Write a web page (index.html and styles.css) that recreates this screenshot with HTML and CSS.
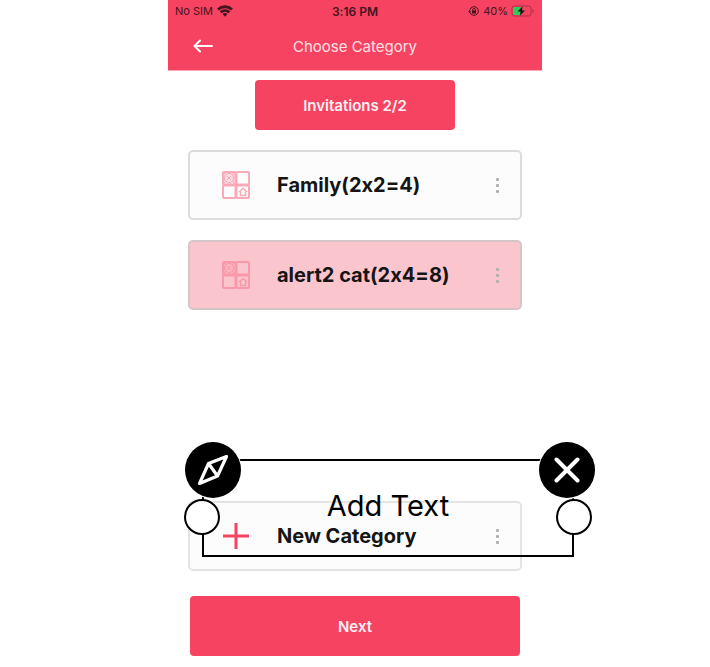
FILE: index.html
```html
<!DOCTYPE html>
<html lang="en">
<head>
<meta charset="utf-8">
<meta name="viewport" content="width=device-width, initial-scale=1">
<title>Choose Category</title>
<link rel="stylesheet" href="styles.css">
</head>
<body>
<svg width="0" height="0" class="defs" aria-hidden="true">
  <symbol id="grid" viewBox="0 0 28 28">
    <g fill="none" stroke="currentColor" stroke-width="2">
      <rect x="1" y="1" width="12.500" height="12.500" rx="1" fill="currentColor" fill-opacity=".35"/>
      <rect x="14.500" y="1" width="12.500" height="12.500" rx="1"/>
      <rect x="1" y="14.500" width="12.500" height="12.500" rx="1"/>
      <rect x="14.500" y="14.500" width="12.500" height="12.500" rx="1"/>
      <circle cx="7" cy="7" r="4.500" stroke-width="1.2"/>
      <path d="M5 5l4 4M9 5L5 9M2 2l2 2M12 2l-2 2M2 12l2-2M12 12l-2-2" stroke-width="1"/>
      <path d="M17 21l4-3.500 4 3.500M18.500 20.500V24.500H23.500V20.500" stroke-width="1.400"/>
    </g>
  </symbol>
  <symbol id="dots" viewBox="0 0 6 16">
    <g fill="currentColor"><rect x="2" y="1" width="3" height="3" rx="1"/><rect x="2" y="7" width="3" height="3" rx="1"/><rect x="2" y="13" width="3" height="3" rx="1"/></g>
  </symbol>
</svg>
<div class="phone">
  <header class="header">
    <div class="status">
      <span class="carrier">No SIM
        <svg width="16" height="12" viewBox="0 0 16 12" aria-hidden="true"><g fill="none" stroke="currentColor" stroke-width="2.800"><path d="M1 4.500C5 .8 11 .8 15 4.500"/><path d="M3.600 7.300c2.600-2.300 6.200-2.300 8.800 0"/></g><path d="M5.500 9C7 7.800 9 7.800 10.500 9L8 11.800z" fill="currentColor"/></svg>
      </span>
      <span class="time">3:16 PM</span>
      <span class="power">
        <svg width="12" height="12" viewBox="0 0 12 12" aria-hidden="true"><circle cx="6" cy="6" r="4.300" fill="none" stroke="currentColor" stroke-width="1"/><rect x="4" y="5.500" width="4" height="3" fill="currentColor"/><path d="M4.700 6V4.700a1.300 1.300 0 0 1 2.600 0V6" fill="none" stroke="currentColor"/><path d="M0 6h3L1.500 8z" fill="currentColor"/></svg>
        40%
        <svg width="24" height="12" viewBox="0 0 24 12" aria-hidden="true"><rect x="1" y="1" width="19" height="10" rx="2.500" fill="none" stroke="#a8304a"/><rect x="2" y="2" width="8" height="8" rx="1" fill="#35c759"/><path d="M21.500 4c1.500 1 1.500 3 0 4z" fill="#a8304a"/><path d="M11.500 1.500L6.500 6.500h3l-.5 4 5-5h-3z" fill="#111"/></svg>
      </span>
    </div>
    <div class="bar">
      <button class="back" aria-label="Back"><svg width="20" height="14" viewBox="0 0 20 14"><path d="M19 7H1.500M7 1.500L1.500 7 7 12.500" fill="none" stroke="currentColor" stroke-width="2" stroke-linecap="round" stroke-linejoin="round"/></svg></button>
      <h1>Choose Category</h1>
    </div>
  </header>
  <main>
    <button class="invitations">Invitations 2/2</button>
    <article class="card">
      <svg class="icon" aria-hidden="true"><use href="#grid"/></svg>
      <h2>Family(2x2=4)</h2>
      <button class="more" aria-label="More options"><svg width="6" height="16"><use href="#dots"/></svg></button>
    </article>
    <article class="card selected">
      <svg class="icon" aria-hidden="true"><use href="#grid"/></svg>
      <h2>alert2 cat(2x4=8)</h2>
      <button class="more" aria-label="More options"><svg width="6" height="16"><use href="#dots"/></svg></button>
    </article>
    <div class="new">
      <article class="card">
        <svg class="icon plus" viewBox="0 0 28 28" aria-hidden="true"><path d="M14 1v26M1 14h26" stroke="currentColor" stroke-width="3"/></svg>
        <h2>New Category</h2>
        <button class="more" aria-label="More options"><svg width="6" height="16"><use href="#dots"/></svg></button>
      </article>
      <div class="textbox">
        <span>Add Text</span>
        <button class="handle left" aria-label="Resize left"></button>
        <button class="handle right" aria-label="Resize right"></button>
        <button class="round rotate" aria-label="Rotate"><svg width="32" height="32" viewBox="0 0 32 32"><path d="M29.500 2.500L11.500 9.500 2.500 29.500l18-7.500zM11.500 9.500l9 12.500" fill="none" stroke="#fff" stroke-width="3.200" stroke-linejoin="round"/></svg></button>
        <button class="round remove" aria-label="Remove"><svg width="26" height="26" viewBox="0 0 26 26"><path d="M2.500 2.500l21 21M23.500 2.500l-21 21" stroke="#fff" stroke-width="4" stroke-linecap="round"/></svg></button>
      </div>
    </div>
    <button class="next">Next</button>
  </main>
</div>
</body>
</html>
```
FILE: styles.css
```css
* { box-sizing: border-box; }
body { margin: 0; background: #fff; color: #151515; font-family: Inter, "Liberation Sans", sans-serif; font-variant-ligatures: no-contextual; }
button { font: inherit; border: 0; padding: 0; color: inherit; background: none; }
svg { display: block; }
h1, h2 { margin: 0; }
.defs { position: absolute; }
.phone { max-width: 374px; margin: 0 auto; }
.header { background: #f64361; height: 70px; box-shadow: 0 1px 0 #fba6b4; }
.status { display: grid; grid-template-columns: 1fr auto 1fr; align-items: center; height: 22px; padding: 0 7px; font-size: 11px; color: #45141d; }
.carrier, .power { display: flex; align-items: center; gap: 4px; }
.power { justify-content: flex-end; gap: 3px; }
.time { font-size: 12px; font-weight: 600; }
.bar { display: grid; grid-template-columns: 20px 1fr 20px; align-items: center; height: 48px; padding: 0 25px; color: #ffe0e6; }
.bar h1 { text-align: center; font-size: 15px; font-weight: 400; }
.back { color: #fff; }
main { display: flex; flex-direction: column; gap: 20px; padding: 10px 20px; }
.invitations, .next { background: #f64361; color: #fff0f3; border-radius: 4px; font-size: 15px; font-weight: 600; }
.invitations { align-self: center; width: 200px; height: 50px; }
.card { display: flex; align-items: center; height: 70px; padding: 0 20px 0 32px; border: 2px solid #dcdcdc; border-radius: 5px; background: #fcfcfc; }
.card h2 { flex: 1; margin-left: 27px; font-size: 20px; font-weight: 700; }
.icon { width: 28px; height: 28px; color: #fba9b6; }
.plus { color: #f64361; }
.more { color: #b0b0b0; }
.selected { background: #fbc5ce; border-color: #d5c5c9; }
.selected .icon { color: #f998a9; }
.new { position: relative; margin-top: 171px; }
.new .card { border-color: #e4e4e4; }
.textbox { position: absolute; top: -42px; left: 14px; right: -52px; height: 98px; border: 2px solid #000; padding-top: 25px; text-align: center; font-size: 29px; line-height: 40px; color: #000; }
.handle, .round { position: absolute; border-radius: 50%; }
.handle { top: 38px; width: 36px; height: 36px; border: 2px solid #000; background: #fff; }
.handle.left { left: -20px; }
.handle.right { right: -20px; }
.round { display: grid; place-items: center; top: -19px; width: 56px; height: 56px; background: #000; box-shadow: 0 0 0 1px #fff; }
.rotate { left: -19px; }
.remove { right: -23px; }
.next { height: 60px; margin: 5px 2px 0; }
```
